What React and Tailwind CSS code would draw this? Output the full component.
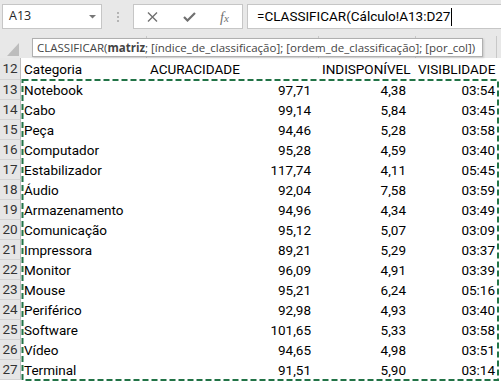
import React from "react";

const rows = [
  [13, "Notebook", "97,71", "4,38", "03:54"],
  [14, "Cabo", "99,14", "5,84", "03:45"],
  [15, "Peça", "94,46", "5,28", "03:58"],
  [16, "Computador", "95,28", "4,59", "03:40"],
  [17, "Estabilizador", "117,74", "4,11", "05:45"],
  [18, "Áudio", "92,04", "7,58", "03:59"],
  [19, "Armazenamento", "94,96", "4,34", "03:49"],
  [20, "Comunicação", "95,12", "5,07", "03:09"],
  [21, "Impressora", "89,21", "5,29", "03:37"],
  [22, "Monitor", "96,09", "4,91", "03:39"],
  [23, "Mouse", "95,21", "6,24", "05:16"],
  [24, "Periférico", "92,98", "4,93", "03:40"],
  [25, "Software", "101,65", "5,33", "03:58"],
  [26, "Vídeo", "94,65", "4,98", "03:51"],
  [27, "Terminal", "91,51", "5,90", "03:14"],
];

const cellFont = { fontFamily: "Roboto, 'Liberation Sans', sans-serif" };

function RowHead({ n, h }) {
  return (
    <div
      className={`w-[21px] ${h} shrink-0 bg-[#e6e6e6] border-b border-[#d4d4d4] border-r border-r-[#bdbdbd] flex items-center justify-center text-[13.5px] text-[#333]`}
    >
      {n}
    </div>
  );
}

export default function App() {
  return (
    <div
      className="w-[501px] h-[382px] overflow-hidden bg-white relative"
      style={cellFont}
    >
      {/* formula bar */}
      <div className="h-[36px] bg-[#e8e8e8] flex items-start pt-[4px] pl-[2px]">
        <div
          className="w-[100px] h-[25px] bg-white border border-[#c6c6c6] flex items-center justify-between pl-[6px] pr-[5px]"
          style={{ fontFamily: "'Open Sans', sans-serif" }}
        >
          <span className="text-[12.5px] text-[#262626]">A13</span>
          <svg width="7" height="4" viewBox="0 0 7 4">
            <path d="M0 0 L7 0 L3.5 3.5 Z" fill="#777" />
          </svg>
        </div>
        <div className="w-[31px] h-[25px] flex flex-col items-center justify-center gap-[2px]">
          <div className="w-[2px] h-[2px] bg-[#b4b4b4]" />
          <div className="w-[2px] h-[2px] bg-[#b4b4b4]" />
          <div className="w-[2px] h-[2px] bg-[#b4b4b4]" />
        </div>
        <div className="w-[110px] h-[25px] bg-white border border-[#c6c6c6] flex items-center pl-[13px]">
          <svg width="11" height="10" viewBox="0 0 11 10">
            <path d="M1 0.5 L10 9.5 M10 0.5 L1 9.5" stroke="#707070" strokeWidth="1.4" fill="none" />
          </svg>
          <svg width="13" height="10" viewBox="0 0 13 10" className="ml-[25px]">
            <path d="M1 5 L4.5 8.5 L12 1" stroke="#707070" strokeWidth="2.2" fill="none" />
          </svg>
          <span
            className="ml-[24px] text-[#707070] italic leading-none"
            style={{ fontFamily: "'Liberation Serif', serif" }}
          >
            <span className="text-[14px]">f</span>
            <span className="text-[11px]">x</span>
          </span>
        </div>
        <div className="ml-[4px] flex-1 h-[25px] bg-white border border-[#c6c6c6] border-r-0 flex items-center pl-[9px]">
          <span className="text-[13.5px] text-black leading-none">=CLASSIFICAR(Cálculo!A13:D27</span>
          <span className="w-[1px] h-[18px] bg-black ml-[1px]" />
        </div>
      </div>

      {/* column header row */}
      <div className="h-[22px] bg-[#e8e8e8] flex relative">
        <div className="w-[22px] h-full shrink-0 flex items-end justify-end pr-[3px] pb-[2px]">
          <svg width="12" height="13" viewBox="0 0 12 13">
            <path d="M12 0 L12 13 L0 13 Z" fill="#bdbdbd" />
          </svg>
        </div>
        <div className="w-[125px] h-full border-r border-[#c8c8c8]" />
        <div className="w-[172px] h-full border-r border-[#c8c8c8]" />
        <div className="w-[97px] h-full border-r border-[#c8c8c8]" />
        <div className="w-[81px] h-full border-r border-[#c8c8c8]" />
        <div className="flex-1" />
        <div
          className="absolute left-[32px] top-[2px] w-[451px] h-[19px] bg-white border border-[#b0b0b0] shadow-[1px_1px_2px_rgba(0,0,0,0.15)] flex items-center pl-[4px] whitespace-nowrap text-[11.5px] text-[#444]"
          style={{ fontFamily: "'Open Sans', sans-serif" }}
        >
          <span>CLASSIFICAR(</span>
          <span className="font-bold">matriz</span>
          <span>; [índice_de_classificação]; [ordem_de_classificação]; [por_col])</span>
        </div>
      </div>

      {/* row 12 header */}
      <div className="flex h-[22px]">
        <RowHead n={12} h="h-[22px]" />
        <div className="w-[125px] pl-[3px] flex items-center text-[13.5px] text-black">Categoria</div>
        <div className="w-[172px] pl-[4px] flex items-center text-[13.5px] text-black">ACURACIDADE</div>
        <div className="w-[97px] pl-[4px] flex items-center text-[13.5px] text-black whitespace-nowrap">INDISPONÍVEL</div>
        <div className="w-[81px] pl-[3px] flex items-center text-[13.5px] text-black whitespace-nowrap">VISIBLIDADE</div>
      </div>

      {rows.map(([n, a, b, c, d]) => (
        <div key={n} className="flex h-[20px]">
          <RowHead n={n} h="h-[20px]" />
          <div className="w-[125px] pl-[3px] flex items-center text-[13.5px] text-black">{a}</div>
          <div className="w-[172px] pr-[7px] flex items-center justify-end text-[13.5px] text-black">{b}</div>
          <div className="w-[97px] pr-[9px] flex items-center justify-end text-[13.5px] text-black">{c}</div>
          <div className="w-[81px] pr-[1px] flex items-center justify-end text-[13.5px] text-black">{d}</div>
        </div>
      ))}

      {/* marching ants selection */}
      <svg
        className="absolute left-[21px] top-[79px] pointer-events-none"
        width="479"
        height="303"
      >
        <rect
          x="1.5"
          y="1"
          width="475.5"
          height="300"
          fill="none"
          stroke="#217346"
          strokeWidth="2"
          strokeDasharray="6 3"
        />
      </svg>
    </div>
  );
}
